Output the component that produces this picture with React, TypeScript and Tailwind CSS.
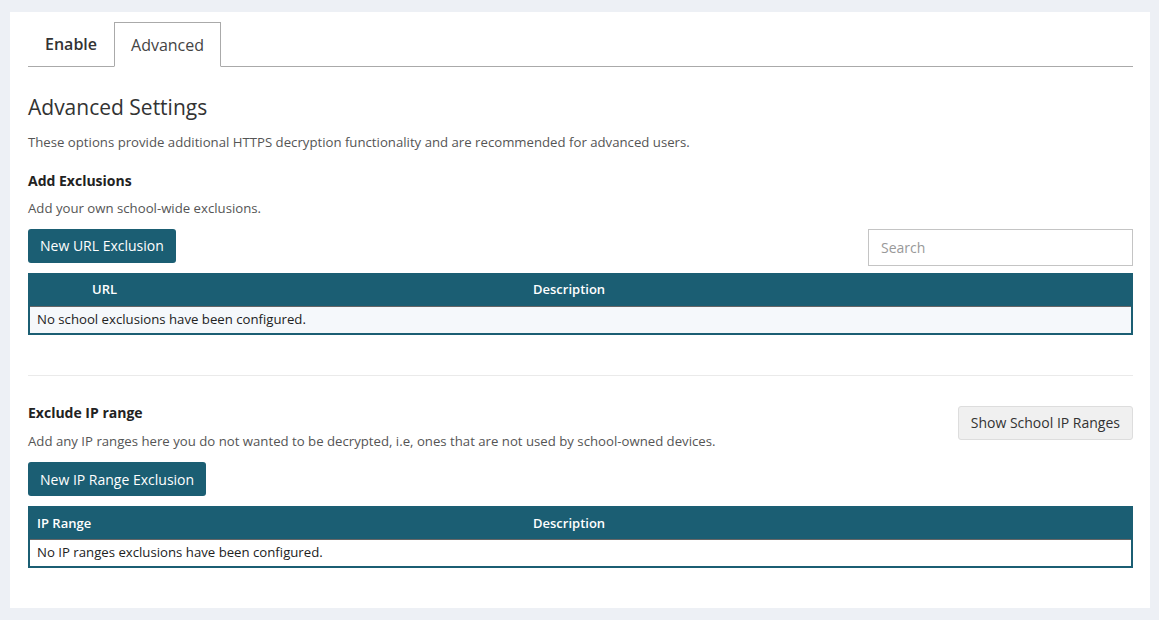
import React from "react";

const teal = "bg-[#1b5e73]";

function DataTable({
  cols,
  empty,
  rowBg,
}: {
  cols: { label: string; w: string }[];
  empty: string;
  rowBg: string;
}) {
  return (
    <div className="border-2 border-[#1b5e73] text-[13.2px]">
      <div className={`${teal} flex h-[31px] items-center text-white text-[13px] font-semibold`}>
        {cols.map((c, i) => (
          <div key={i} className={`${c.w} px-[7px]`}>
            {c.label}
          </div>
        ))}
      </div>
      <div className={`${rowBg} border-t border-[#666] h-[27px] flex items-center px-[7px] text-[#222]`}>{empty}</div>
    </div>
  );
}

export default function App() {
  return (
    <div className="min-h-[620px] bg-[#edf0f5] pt-3 pl-[10px] pr-[9px] pb-3 font-['Open_Sans',sans-serif] text-[#333]">
      <div className="bg-white pl-[18px] pr-[17px] pt-[10px] pb-[40px]">
        {/* tabs */}
        <div className="flex border-b border-[#aaa] h-[45px]">
          <button className="px-[17px] text-[16px] font-semibold text-[#333] h-full">Enable</button>
          <button className="px-[16px] text-[16px] font-medium text-[#444] h-[45px] border border-[#aaa] border-b-white bg-white -mb-px">
            Advanced
          </button>
        </div>

        <h2 className="mt-[26px] text-[21px] leading-[28px] text-[#333]">Advanced Settings</h2>
        <p className="mt-[12px] text-[13.2px] text-[#555]">
          These options provide additional HTTPS decryption functionality and are recommended for advanced users.
        </p>

        <h3 className="mt-[17px] text-[14px] font-bold text-[#222]">Add Exclusions</h3>
        <p className="mt-[8px] text-[13.2px] text-[#555]">Add your own school-wide exclusions.</p>

        <div className="mt-[10px] flex items-start justify-between">
          <button className={`${teal} text-white text-[14px] rounded-[3px] h-[34px] px-3`}>New URL Exclusion</button>
          <input
            placeholder="Search"
            className="w-[265px] h-[37px] border border-[#c4c4c4] px-3 text-[14px] placeholder:text-[#999] outline-none"
          />
        </div>

        <div className="mt-[7px]">
          <DataTable
            cols={[
              { label: "", w: "w-[55px]" },
              { label: "URL", w: "w-[441px]" },
              { label: "Description", w: "flex-1" },
            ]}
            empty="No school exclusions have been configured."
            rowBg="bg-[#f5f8fb]"
          />
        </div>

        <div className="mt-[40px] border-t border-[#eaeaea]" />

        <div className="mt-[26px] flex items-start justify-between">
          <div>
            <h3 className="text-[14px] font-bold text-[#222]">Exclude IP range</h3>
            <p className="mt-[9px] text-[13.2px] text-[#555]">
              Add any IP ranges here you do not wanted to be decrypted, i.e, ones that are not used by school-owned devices.
            </p>
          </div>
          <button className="mt-[4px] h-[34px] px-3 bg-[#f0f0f0] border border-[#ddd] rounded-[3px] text-[14px] text-[#333]">
            Show School IP Ranges
          </button>
        </div>

        <button className={`${teal} mt-[11px] text-white text-[14px] rounded-[3px] h-[34px] px-3`}>
          New IP Range Exclusion
        </button>

        <div className="mt-[10px]">
          <DataTable
            cols={[
              { label: "IP Range", w: "w-[496px]" },
              { label: "Description", w: "flex-1" },
            ]}
            empty="No IP ranges exclusions have been configured."
            rowBg="bg-white"
          />
        </div>
      </div>
    </div>
  );
}
